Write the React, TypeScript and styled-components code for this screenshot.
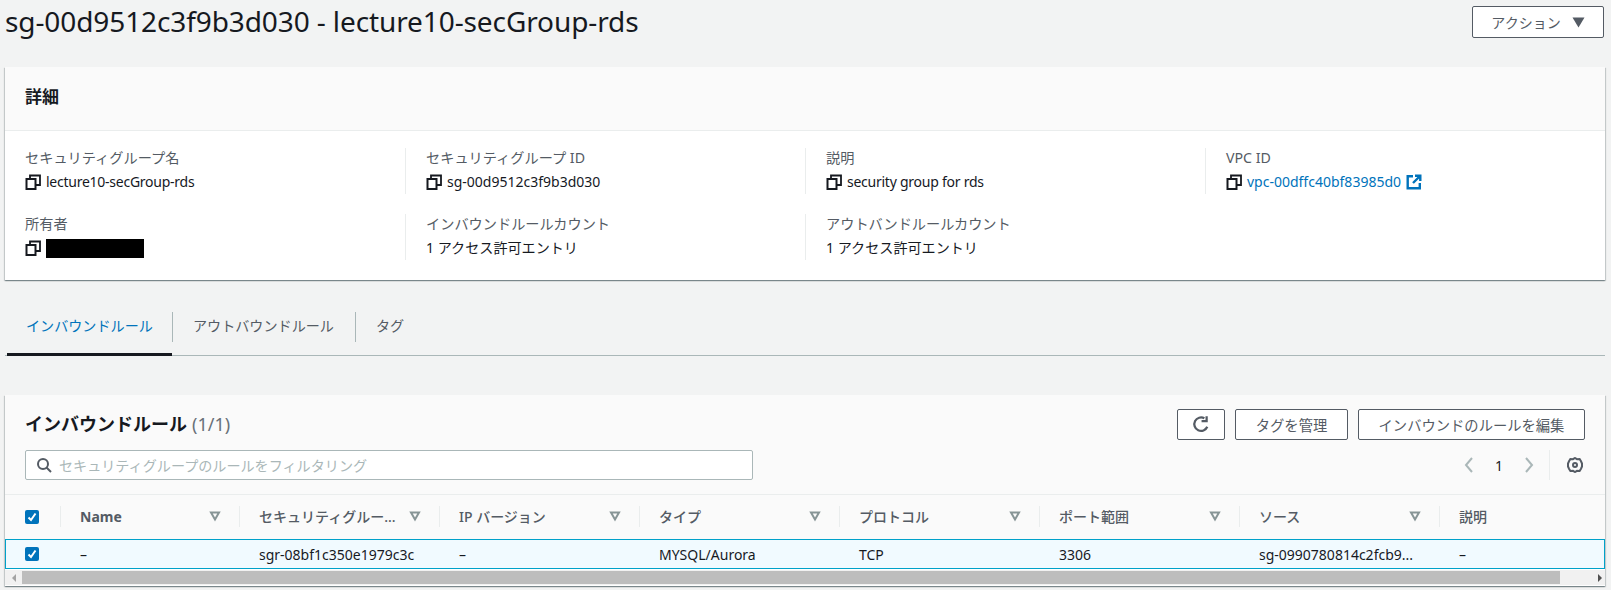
import React, { FC } from 'react';
import styled, { createGlobalStyle } from 'styled-components';

const GlobalStyle = createGlobalStyle`
  html, body {
    margin: 0;
    padding: 0;
    background: #f2f3f3;
    color: #16191f;
    font-family: 'Noto Sans', 'Noto Sans CJK JP', sans-serif;
    font-size: 14px;
  }
  * { box-sizing: border-box; }
`;

const Page = styled.div`
  width: 1611px;
  height: 590px;
  overflow: hidden;
  padding: 0 6px 0 5px;
`;

const TitleBar = styled.div`
  display: flex;
  justify-content: space-between;
  align-items: flex-start;
  height: 67px;
`;

const Title = styled.h1`
  margin: 0;
  font-size: 28px;
  font-weight: 400;
  line-height: 42px;
  letter-spacing: -0.1px;
`;

const Button = styled.button<{ $width: number }>`
  width: ${({ $width }) => $width}px;
  height: 31px;
  padding: 0;
  display: inline-flex;
  align-items: center;
  justify-content: center;
  gap: 11px;
  background: #fff;
  border: 1px solid #545b64;
  border-radius: 2px;
  color: #545b64;
  font: inherit;
  font-size: 14.3px;
`;

const ActionButton = styled(Button)`
  height: 32px;
  margin: 6px 1px 0 0;
  font-size: 14px;
`;

const Card = styled.section`
  background: #fff;
  box-shadow: 0 1px 1px 0 rgba(0, 28, 36, 0.3), 1px 1px 1px 0 rgba(0, 28, 36, 0.15), -1px 1px 1px 0 rgba(0, 28, 36, 0.15);
`;

const DetailHeader = styled.div`
  height: 64px;
  padding: 0 20px 6px;
  display: flex;
  align-items: center;
  background: #fafafa;
  border-bottom: 1px solid #eaeded;
`;

const DetailHeading = styled.h2`
  margin: 0;
  font-size: 17px;
  font-weight: 700;
`;

const DetailGrid = styled.div`
  display: grid;
  grid-template-columns: repeat(4, 400px);
  grid-auto-rows: 46px;
  row-gap: 20px;
  padding: 17px 0 20px;
`;

const DetailItem = styled.div`
  padding-left: 20px;
  & + & { border-left: 1px solid #eaeded; }
  &:nth-child(5) { border-left: 0; }
`;

const ItemLabel = styled.div`
  height: 23px;
  line-height: 20px;
  font-size: 14.2px;
  color: #545b64;
`;

const ItemValue = styled.div`
  display: flex;
  align-items: center;
  gap: 5px;
  height: 22px;
  line-height: 22px;
`;

const PlainValue = styled(ItemValue)`
  font-size: 14.1px;
`;

const ValueText = styled.span<{ $tight?: boolean }>`
  letter-spacing: ${({ $tight }) => ($tight ? '-0.25px' : '0')};
`;

const ValueLink = styled.a`
  color: #0073bb;
`;

const Redacted = styled.span`
  width: 98px;
  height: 19px;
  background: #000;
`;

const Tabs = styled.div`
  display: flex;
  height: 47px;
  margin-top: 29px;
  border-bottom: 1px solid #aab7b8;
`;

const Tab = styled.div<{ $active?: boolean; $width: number }>`
  position: relative;
  width: ${({ $width }) => $width}px;
  margin-left: ${({ $active }) => ($active ? '2px' : '0')};
  margin-bottom: -1px;
  padding: 6px 0 0 ${({ $active }) => ($active ? '19px' : '21px')};
  font-size: 14.1px;
  line-height: 22px;
  color: ${({ $active }) => ($active ? '#0073bb' : '#545b64')};
  border-bottom: 3px solid ${({ $active }) => ($active ? '#16191f' : 'transparent')};
  &:not(:first-child)::before {
    content: '';
    position: absolute;
    left: 0;
    top: 3px;
    height: 30px;
    border-left: 1px solid #aab7b8;
  }
`;

const RulesCard = styled(Card)`
  margin-top: 39px;
  height: 191px;
`;

const RulesHeader = styled.div`
  height: 100px;
  padding: 14px 20px 0;
  background: #fafafa;
  border-bottom: 1px solid #eaeded;
`;

const HeaderRow = styled.div`
  display: flex;
  align-items: center;
  justify-content: space-between;
  height: 30px;
`;

const RulesTitle = styled.h2`
  margin: 0 0 2px;
  font-size: 18px;
  font-weight: 700;
`;

const Count = styled.span`
  margin-left: 5px;
  font-weight: 400;
  color: #687078;
`;

const ButtonGroup = styled.div`
  display: flex;
  gap: 10px;
`;

const ToolRow = styled(HeaderRow)`
  margin-top: 11px;
`;

const FilterBox = styled.div`
  display: flex;
  align-items: center;
  gap: 7px;
  width: 728px;
  height: 30px;
  padding-left: 10px;
  background: #fff;
  border: 1px solid #aab7b8;
  border-radius: 2px;
  color: #aab7b8;
  font-size: 14.1px;
`;

const Pager = styled.div`
  display: flex;
  align-items: center;
  height: 30px;
`;

const PageNumber = styled.span`
  width: 44px;
  text-align: center;
`;

const PagerSettings = styled.div`
  display: flex;
  align-items: center;
  height: 30px;
  margin-left: 12px;
  padding: 0 2px 0 17px;
  border-left: 1px solid #eaeded;
  color: #545b64;
`;

const TableGrid = styled.div`
  display: grid;
  grid-template-columns: 55px 179px repeat(6, 200px) 1fr;
`;

const HeadCell = styled.div`
  position: relative;
  display: flex;
  align-items: center;
  justify-content: space-between;
  height: 44px;
  padding: 0 18px 2px 20px;
  background: #fafafa;
  font-weight: 500;
  color: #545b64;
  white-space: nowrap;
  &::before {
    content: '';
    position: absolute;
    left: 0;
    top: 11px;
    height: 21px;
    border-left: 1px solid #eaeded;
  }
  &:first-child::before { display: none; }
`;

const LatinHeadText = styled.span`
  font-weight: 700;
`;

const CheckCell = styled(HeadCell)`
  padding: 0 0 0 20px;
`;

const BodyRow = styled.div`
  display: contents;
`;

const BodyCell = styled.div`
  display: flex;
  align-items: center;
  height: 30px;
  padding-left: 20px;
  background: #f1faff;
  border-top: 1px solid #00a1c9;
  border-bottom: 1px solid #00a1c9;
  white-space: nowrap;
  &:first-child { border-left: 1px solid #00a1c9; padding-left: 19px; }
  &:last-child { border-right: 1px solid #00a1c9; }
`;

const CheckBox = styled.span`
  display: flex;
  align-items: center;
  justify-content: center;
  width: 14px;
  height: 14px;
  background: #0073bb;
  border-radius: 2px;
`;

const ScrollBar = styled.div`
  display: flex;
  align-items: center;
  height: 15px;
  margin-top: 1px;
  background: #f1f1f1;
`;

const ScrollArrow = styled.span<{ $dir: 'left' | 'right' }>`
  flex: none;
  display: flex;
  justify-content: center;
  width: ${({ $dir }) => ($dir === 'left' ? 17 : 45)}px;
  &::after {
    content: '';
    border-top: 4px solid transparent;
    border-bottom: 4px solid transparent;
    ${({ $dir }) =>
      $dir === 'left'
        ? 'border-right: 4px solid #a3a3a3;'
        : 'border-left: 4px solid #505050; margin-left: 34px;'}
  }
`;

const ScrollThumb = styled.div`
  flex: 1;
  height: 13px;
  background: #bdbdbd;
`;

const CopyIcon: FC = () => (
  <svg width="16" height="16" viewBox="0 0 16 16" fill="none" stroke="#16191f" strokeWidth="2">
    <path d="M5 4V1.500h10V11h-4" strokeWidth="1.800" />
    <rect x="1.500" y="5" width="9" height="10" />
  </svg>
);

const ExternalIcon: FC = () => (
  <svg width="16" height="16" viewBox="0 0 16 16" fill="none" stroke="#0073bb" strokeWidth="2.400">
    <path d="M7 2.200H1.700v12.100h12.100V9" />
    <path d="M9 1.700h5.300V7M14 2L7 9" />
  </svg>
);

const CaretDown: FC = () => (
  <svg width="13" height="11" viewBox="0 0 13 11" fill="#545b64">
    <path d="M0.500 0.500h12L6.500 10.500z" />
  </svg>
);

const SortIcon: FC = () => (
  <svg width="12" height="12" viewBox="0 0 12 12" fill="none" stroke="#879596" strokeWidth="2">
    <path d="M2 2.500h8L6 9.500z" />
  </svg>
);

const RefreshIcon: FC = () => (
  <svg width="18" height="18" viewBox="0 0 16 16" fill="none" stroke="#545b64" strokeWidth="2">
    <path d="M13.600 10.500A6 6 0 1 1 11 2.900" />
    <path d="M13 1v4.500H8.500" />
  </svg>
);

const SearchIcon: FC = () => (
  <svg width="16" height="16" viewBox="0 0 16 16" fill="none" stroke="#545b64" strokeWidth="2">
    <circle cx="7" cy="7" r="5" />
    <path d="M10.500 10.500L15 15" />
  </svg>
);

const Chevron: FC<{ dir: 'left' | 'right' }> = ({ dir }) => (
  <svg width="16" height="16" viewBox="0 0 16 16" fill="none" stroke="#aab7b8" strokeWidth="2">
    <path d={dir === 'left' ? 'M11 1L5 8l6 7' : 'M5 1l6 7-6 7'} />
  </svg>
);

const GearIcon: FC = () => (
  <svg width="16" height="16" viewBox="0 0 16 16" fill="none" stroke="#545b64" strokeWidth="2">
    <path d="M8 1l2 1.200 2.600-.2 1.400 2.300L15 6.500v3l-1 2.200-1.400 2.300-2.600-.2L8 15l-2-1.200-2.600.2L2 11.700 1 9.500v-3l1-2.200L3.400 2 6 2.200z" />
    <circle cx="8" cy="8" r="2" />
  </svg>
);

const CheckMark: FC = () => (
  <svg width="10" height="10" viewBox="0 0 10 10" fill="none" stroke="#fff" strokeWidth="2">
    <path d="M1.500 5.500L4 8l4.500-6.500" />
  </svg>
);

const columns = [
  'セキュリティグルー...',
  'IP バージョン',
  'タイプ',
  'プロトコル',
  'ポート範囲',
  'ソース',
];

const row = ['–', 'sgr-08bf1c350e1979c3c', '–', 'MYSQL/Aurora', 'TCP', '3306', 'sg-0990780814c2fcb9...', '–'];

const App: FC = () => (
  <Page>
    <GlobalStyle />
    <TitleBar>
      <Title>sg-00d9512c3f9b3d030 - lecture10-secGroup-rds</Title>
      <ActionButton $width={132}>
        アクション <CaretDown />
      </ActionButton>
    </TitleBar>

    <Card>
      <DetailHeader>
        <DetailHeading>詳細</DetailHeading>
      </DetailHeader>
      <DetailGrid>
        <DetailItem>
          <ItemLabel>セキュリティグループ名</ItemLabel>
          <ItemValue><CopyIcon /><ValueText $tight>lecture10-secGroup-rds</ValueText></ItemValue>
        </DetailItem>
        <DetailItem>
          <ItemLabel>セキュリティグループ ID</ItemLabel>
          <ItemValue><CopyIcon /><ValueText>sg-00d9512c3f9b3d030</ValueText></ItemValue>
        </DetailItem>
        <DetailItem>
          <ItemLabel>説明</ItemLabel>
          <ItemValue><CopyIcon /><ValueText $tight>security group for rds</ValueText></ItemValue>
        </DetailItem>
        <DetailItem>
          <ItemLabel>VPC ID</ItemLabel>
          <ItemValue>
            <CopyIcon />
            <ValueLink>vpc-00dffc40bf83985d0</ValueLink>
            <ExternalIcon />
          </ItemValue>
        </DetailItem>
        <DetailItem>
          <ItemLabel>所有者</ItemLabel>
          <ItemValue><CopyIcon /><Redacted /></ItemValue>
        </DetailItem>
        <DetailItem>
          <ItemLabel>インバウンドルールカウント</ItemLabel>
          <PlainValue>1 アクセス許可エントリ</PlainValue>
        </DetailItem>
        <DetailItem>
          <ItemLabel>アウトバンドルールカウント</ItemLabel>
          <PlainValue>1 アクセス許可エントリ</PlainValue>
        </DetailItem>
      </DetailGrid>
    </Card>

    <Tabs>
      <Tab $active $width={165}>インバウンドルール</Tab>
      <Tab $width={183}>アウトバウンドルール</Tab>
      <Tab $width={80}>タグ</Tab>
    </Tabs>

    <RulesCard>
      <RulesHeader>
        <HeaderRow>
          <RulesTitle>
            インバウンドルール<Count>(1/1)</Count>
          </RulesTitle>
          <ButtonGroup>
            <Button $width={48} aria-label="refresh"><RefreshIcon /></Button>
            <Button $width={113}>タグを管理</Button>
            <Button $width={227}>インバウンドのルールを編集</Button>
          </ButtonGroup>
        </HeaderRow>
        <ToolRow>
          <FilterBox>
            <SearchIcon />
            セキュリティグループのルールをフィルタリング
          </FilterBox>
          <Pager>
            <Chevron dir="left" />
            <PageNumber>1</PageNumber>
            <Chevron dir="right" />
            <PagerSettings><GearIcon /></PagerSettings>
          </Pager>
        </ToolRow>
      </RulesHeader>

      <TableGrid>
        <CheckCell><CheckBox><CheckMark /></CheckBox></CheckCell>
        <HeadCell>
          <LatinHeadText>Name</LatinHeadText>
          <SortIcon />
        </HeadCell>
        {columns.map((name) => (
          <HeadCell key={name}>
            <span>{name}</span>
            <SortIcon />
          </HeadCell>
        ))}
        <HeadCell><span>説明</span></HeadCell>
        <BodyRow>
          <BodyCell><CheckBox><CheckMark /></CheckBox></BodyCell>
          {row.map((value, index) => (
            <BodyCell key={index}>{value}</BodyCell>
          ))}
        </BodyRow>
      </TableGrid>

      <ScrollBar>
        <ScrollArrow $dir="left" />
        <ScrollThumb />
        <ScrollArrow $dir="right" />
      </ScrollBar>
    </RulesCard>
  </Page>
);

export default App;
